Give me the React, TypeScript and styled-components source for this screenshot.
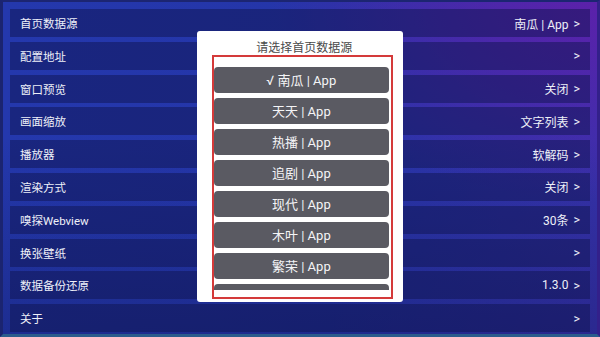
import React from "react";
import styled, { createGlobalStyle } from "styled-components";

const Global = createGlobalStyle`
  html, body { margin: 0; padding: 0; width: 600px; height: 337px; overflow: hidden; background: #16206a; }
  * { box-sizing: border-box; }
  body { font-family: Roboto, "Noto Sans CJK SC", "Noto Sans", sans-serif; }
`;

const Screen = styled.div`
  position: relative;
  width: 600px;
  height: 337px;
  border-left: 3px solid #1b2470;
  border-top: 2px solid #1c2572;
  border-right: 3px solid #33208a;
  border-bottom: 3px solid #2b5c8c;
  background:
    radial-gradient(ellipse 55% 60% at 100% 0%, rgba(98, 30, 170, 0.85) 0%, rgba(98, 30, 170, 0) 100%),
    linear-gradient(to bottom, rgba(0, 0, 0, 0) 40%, rgba(8, 12, 60, 0.25) 100%),
    linear-gradient(to right, #2438ad 0%, #2535a8 55%, #3632ab 100%);
`;

const List = styled.div`
  display: flex;
  flex-direction: column;
  gap: 4.8px;
  padding: 7px 7px 0 7px;
`;

const Row = styled.div`
  height: 28px;
  display: flex;
  align-items: center;
  justify-content: space-between;
  padding: 0 10px 0 10px;
  background: rgba(14, 18, 78, 0.48);
  color: #eef0f8;
  font-size: 11.5px;
`;

const Label = styled.span``;
const Value = styled.span`
  display: flex;
  align-items: center;
  gap: 5px;
  font-size: 12px;
  white-space: pre;
`;
const Arrow = styled.span`
  font-size: 12.5px;
`;

const Dialog = styled.div`
  position: absolute;
  left: 194px;
  top: 29px;
  width: 206px;
  height: 271px;
  background: #ffffff;
  border-radius: 3px;
  display: flex;
  flex-direction: column;
  padding: 0 10px 3px 14.7px;
`;

const Title = styled.div`
  height: 24px;
  display: flex;
  align-items: flex-end;
  justify-content: center;
  padding-left: 4px;
  color: #4a4a4a;
  font-size: 12px;
  line-height: 14px;
`;

const Frame = styled.div`
  flex: 1;
  border: 2px solid #d43a3a;
  padding: 9.7px 2px 7px 0;
  display: flex;
  flex-direction: column;
  min-height: 0;
`;

const Scroller = styled.div`
  flex: 1;
  overflow: hidden;
  display: flex;
  flex-direction: column;
  gap: 5px;
`;

const Option = styled.div`
  flex: 0 0 26px;
  height: 26px;
  border-radius: 4px;
  background: #5a5a62;
  color: #f4f4f6;
  font-size: 13px;
  display: flex;
  align-items: center;
  justify-content: center;
  white-space: pre;
`;

const rows: [string, string][] = [
  ["首页数据源", "南瓜 | App"],
  ["配置地址", ""],
  ["窗口预览", "关闭"],
  ["画面缩放", "文字列表"],
  ["播放器", "软解码"],
  ["渲染方式", "关闭"],
  ["嗅探Webview", "30条"],
  ["换张壁纸", ""],
  ["数据备份还原", "1.3.0"],
  ["关于", ""],
];

const options = ["√ 南瓜 | App", "天天 | App", "热播 | App", "追剧 | App", "现代 | App", "木叶 | App", "繁荣 | App", "星空 | App"];

export default function App() {
  return (
    <>
      <Global />
      <Screen>
        <List>
          {rows.map(([l, v]) => (
            <Row key={l}>
              <Label>{l}</Label>
              <Value>
                {v && <span>{v}</span>}
                <Arrow>&gt;</Arrow>
              </Value>
            </Row>
          ))}
        </List>
        <Dialog>
          <Title>请选择首页数据源</Title>
          <Frame>
            <Scroller>
              {options.map((o) => (
                <Option key={o}>{o}</Option>
              ))}
            </Scroller>
          </Frame>
        </Dialog>
      </Screen>
    </>
  );
}
